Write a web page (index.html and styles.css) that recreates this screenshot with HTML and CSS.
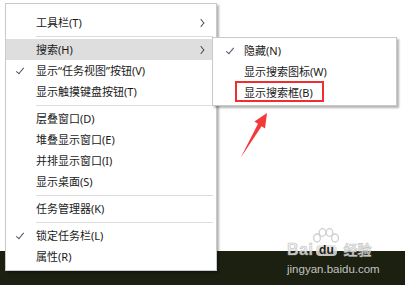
FILE: index.html
```html
<!DOCTYPE html>
<html lang="zh-CN">
<head>
  <meta charset="UTF-8">
  <title>任务栏菜单</title>
  <link rel="stylesheet" href="styles.css">
</head>
<body>
  <div class="screen">
    <div class="desk"></div>
    <div class="taskbar"></div>

    <!-- Taskbar context menu -->
    <div class="menu">
      <div class="item"><span class="check"></span><span class="label">工具栏(T)</span><span class="more"></span></div>
      <div class="sep"></div>
      <div class="item active"><span class="check"></span><span class="label">搜索(H)</span><span class="more"></span></div>
      <div class="item"><span class="check on"></span><span class="label">显示“任务视图”按钮(V)</span></div>
      <div class="item"><span class="check"></span><span class="label">显示触摸键盘按钮(T)</span></div>
      <div class="sep"></div>
      <div class="item"><span class="check"></span><span class="label">层叠窗口(D)</span></div>
      <div class="item"><span class="check"></span><span class="label">堆叠显示窗口(E)</span></div>
      <div class="item"><span class="check"></span><span class="label">并排显示窗口(I)</span></div>
      <div class="item"><span class="check"></span><span class="label">显示桌面(S)</span></div>
      <div class="sep"></div>
      <div class="item"><span class="check"></span><span class="label">任务管理器(K)</span></div>
      <div class="sep"></div>
      <div class="item"><span class="check on"></span><span class="label">锁定任务栏(L)</span></div>
      <div class="item"><span class="check"></span><span class="label">属性(R)</span></div>
    </div>

    <!-- Search submenu -->
    <div class="submenu">
      <div class="item"><span class="check on"></span><span class="label">隐藏(N)</span></div>
      <div class="item"><span class="check"></span><span class="label">显示搜索图标(W)</span></div>
      <div class="item"><span class="check"></span><span class="label">显示搜索框(B)</span></div>
    </div>

    <!-- Annotation -->
    <div class="mark"></div>
    <svg class="arrow" width="405" height="285" viewBox="0 0 405 285">
      <polygon points="267,113 265,128.5 261.6,126.2 240.5,158 258,123.8 254.4,121.6" fill="#f2393b"/>
    </svg>

    <!-- Watermark -->
    <div class="watermark">
      <div class="wm-logo">
        <span class="wm-bai">Bai</span>
        <span class="wm-paw">
          <svg width="30" height="22" viewBox="0 0 30 22">
            <g fill="none" stroke="#cfcfcf" stroke-width="1.3">
              <ellipse cx="6" cy="10" rx="3.4" ry="4"/>
              <ellipse cx="11.5" cy="4.5" rx="3.3" ry="3.8"/>
              <ellipse cx="18.5" cy="4.5" rx="3.3" ry="3.8"/>
              <ellipse cx="24" cy="10" rx="3.4" ry="4"/>
            </g>
          </svg>
          <span class="wm-du">du</span>
        </span>
        <span class="wm-jy">经验</span>
      </div>
      <div class="wm-url">jingyan.baidu.com</div>
    </div>
  </div>
</body>
</html>
```

FILE: styles.css
```css
* {
  margin: 0;
  padding: 0;
  box-sizing: border-box;
}

body {
  font-family: "Noto Sans", "Noto Sans CJK SC", sans-serif;
  background: #ffffff;
  width: 405px;
  height: 285px;
  overflow: hidden;
}

.screen {
  position: relative;
  width: 405px;
  height: 285px;
  display: flex;
  flex-direction: column;
}

.desk {
  height: 251px;
  background: #ffffff;
}

.taskbar {
  flex: 1;
  background: #1c2011;
}

/* Menus */
.menu,
.submenu {
  position: absolute;
  background: #ffffff;
  border: 1px solid #c9c9c9;
  box-shadow: 2px 2px 2px rgba(0, 0, 0, 0.3);
  color: #1a1a1a;
  font-size: 11px;
}

.menu {
  left: 5px;
  top: 3px;
  width: 212px;
  padding: 8px 0 3px;
}

.submenu {
  left: 212px;
  top: 37px;
  width: 185px;
  padding: 2px 0;
}

.item {
  display: flex;
  align-items: center;
  height: 21px;
  line-height: 21px;
  padding-right: 9px;
  white-space: nowrap;
}

.item.active {
  background: #dedede;
}

.check {
  position: relative;
  width: 30px;
  height: 21px;
  flex: none;
}

.submenu .check {
  width: 31px;
}

.check.on::after {
  content: "";
  position: absolute;
  left: 12px;
  top: 6px;
  width: 3px;
  height: 7px;
  border: solid #4a5566;
  border-width: 0 1px 1px 0;
  transform: rotate(40deg);
}

.submenu .check.on::after {
  left: 15px;
}

.label {
  flex: 1;
}

.more {
  width: 6px;
  height: 6px;
  margin-right: 3px;
  border: solid #444;
  border-width: 1px 1px 0 0;
  transform: scaleX(0.8) rotate(45deg);
}

.sep {
  height: 6px;
  display: flex;
  align-items: center;
  padding: 0 3px 0 30px;
}

.sep::before {
  content: "";
  flex: 1;
  height: 1px;
  background: #dcdcdc;
}

/* Annotation */
.mark {
  position: absolute;
  left: 235px;
  top: 81px;
  width: 89px;
  height: 21px;
  border: 2.5px solid #ee2f2f;
}

.arrow {
  position: absolute;
  left: 0;
  top: 0;
}

/* Watermark */
.watermark {
  position: absolute;
  left: 287px;
  top: 227px;
  width: 92px;
  display: flex;
  flex-direction: column;
  align-items: flex-start;
}

.wm-logo {
  display: flex;
  align-items: flex-end;
  height: 29px;
}

.wm-bai,
.wm-jy {
  font-family: "Liberation Sans", "Noto Sans CJK SC", sans-serif;
  font-weight: bold;
  color: rgba(235, 235, 235, 0.85);
  -webkit-text-stroke: 0.6px rgba(170, 170, 170, 0.7);
  line-height: 14px;
  margin-bottom: -1px;
}

.wm-bai {
  font-size: 16px;
  letter-spacing: 0.5px;
}

.wm-jy {
  font-size: 14px;
  margin-left: 3px;
}

.wm-paw {
  display: flex;
  flex-direction: column;
  align-items: center;
  width: 28px;
  margin-left: -1px;
}

.wm-paw svg {
  display: block;
  margin-bottom: -5px;
}

.wm-du {
  font-family: "Liberation Sans", sans-serif;
  font-weight: bold;
  font-size: 12px;
  line-height: 11px;
  padding: 0 3px;
  border-radius: 4px;
  background: rgba(225, 225, 225, 0.85);
  color: #1c2011;
}

.wm-url {
  margin-top: 7px;
  font-family: "Liberation Sans", sans-serif;
  font-size: 11.5px;
  line-height: 12px;
  color: rgba(225, 225, 225, 0.85);
}
```
